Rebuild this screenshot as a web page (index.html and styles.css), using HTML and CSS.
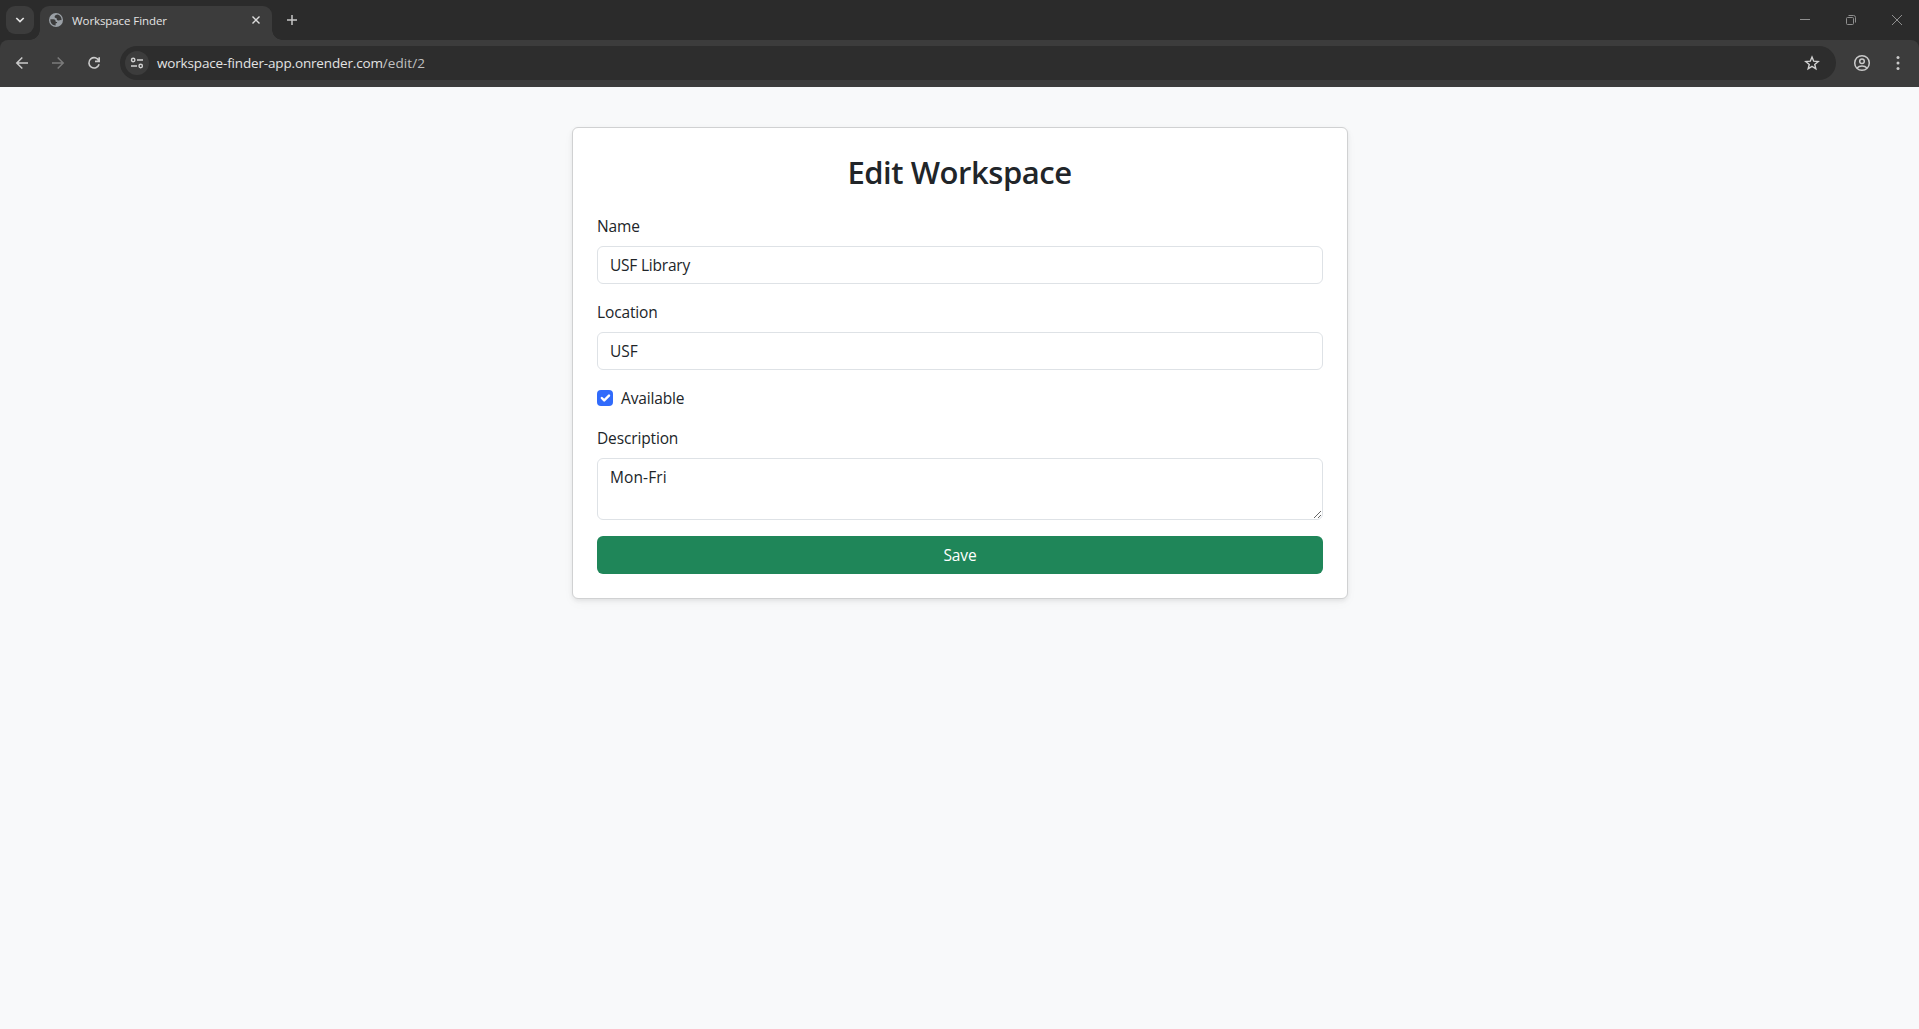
FILE: index.html
```html
<!DOCTYPE html>
<html lang="en">
<head>
<meta charset="utf-8">
<title>Workspace Finder</title>
<link rel="stylesheet" href="styles.css">
</head>
<body>
<header class="browser">
  <div class="tabstrip">
    <button class="tab-search" aria-label="Search tabs"><svg width="10" height="8" viewBox="0 0 10 8"><path d="M1.3 2l3.7 3.6L8.7 2" fill="none" stroke="#e3e3e3" stroke-width="1.7"/></svg></button>
    <div class="tab">
      <svg class="favicon" width="14" height="14" viewBox="0 0 14 14"><circle cx="7" cy="7" r="7" fill="#9aa0a6"/><path d="M1.400 6.300H4.500c1.500 0 2 .7 2 1.700 0 .8.600 1 1.500 1 .5 1-.4 1.400-1.400 1.500v2c-2.800.2-5.600-2.300-5.200-6.200zM8.800 1.600C7 1.700 5.500 2.800 5.600 3.900c.1.900.9 1 1.800 1 .3.900.4 2.300 1.700 2.500 1.300.2 2-.5 3.500-.2C12.700 4.300 11 2.200 8.800 1.600z" fill="#3c3c3c"/></svg>
      <span class="tab-title">Workspace Finder</span>
      <svg class="tab-close" width="10" height="10" viewBox="0 0 10 10"><path d="M1.500 1.500l7 7M8.500 1.500l-7 7" stroke="#dcdcdc" stroke-width="1.400"/></svg>
    </div>
    <svg class="new-tab" width="12" height="12" viewBox="0 0 12 12"><path d="M6 1v10M1 6h10" stroke="#c7c7c7" stroke-width="1.500"/></svg>
    <div class="window-controls">
      <svg width="12" height="12" viewBox="0 0 12 12"><path d="M1 5.500h10" stroke="#8f8f8f"/></svg>
      <svg width="12" height="12" viewBox="0 0 12 12" fill="none" stroke="#8f8f8f"><rect x="1.500" y="3.500" width="7" height="7" rx="1"/><path d="M3.500 1.500h5a2 2 0 0 1 2 2v5"/></svg>
      <svg width="12" height="12" viewBox="0 0 12 12"><path d="M1 1l10 10M11 1L1 11" stroke="#8f8f8f"/></svg>
    </div>
  </div>
  <div class="toolbar">
    <div class="nav">
      <svg width="16" height="16" viewBox="0 0 16 16" fill="none" stroke="#cacaca" stroke-width="1.500"><path d="M14 8H3M8.300 2.500L2.800 8l5.500 5.500"/></svg>
      <svg width="16" height="16" viewBox="0 0 16 16" fill="none" stroke="#7b7b7b" stroke-width="1.500"><path d="M2 8h11M7.700 2.500L13.200 8l-5.500 5.500"/></svg>
      <svg width="16" height="16" viewBox="0 0 16 16" fill="none" stroke="#cacaca" stroke-width="1.600"><path d="M12.900 5.800A5.200 5.200 0 1 0 13.100 9.300M13.200 2.200v4.200H9"/></svg>
    </div>
    <div class="omnibox">
      <span class="site-info"><svg width="14" height="14" viewBox="0 0 14 14" fill="none" stroke="#d2d2d2" stroke-width="1.400"><circle cx="3.200" cy="4" r="1.700"/><path d="M7 4h6M1 10h6"/><circle cx="10.700" cy="10" r="1.700"/></svg></span>
      <span class="url">workspace-finder-app.onrender.com<span class="path">/edit/2</span></span>
      <svg class="star" width="16" height="16" viewBox="0 0 16 16"><path d="M8 2l1.700 4.150 4.500.35-3.450 2.900 1.080 4.350L8 11.400l-3.830 2.350L5.250 9.400 1.800 6.500l4.500-.35z" fill="none" stroke="#d2d2d2" stroke-width="1.400"/></svg>
    </div>
    <svg class="profile" width="18" height="18" viewBox="0 0 18 18" fill="none" stroke="#cacaca" stroke-width="1.500"><circle cx="9" cy="9" r="7.300"/><circle cx="9" cy="7.300" r="2.300"/><path d="M4 14c2.500-2.600 7.500-2.600 10 0"/></svg>
    <svg class="menu" width="4" height="14" viewBox="0 0 4 14" fill="#cacaca"><circle cx="2" cy="1.600" r="1.500"/><circle cx="2" cy="7" r="1.500"/><circle cx="2" cy="12.400" r="1.500"/></svg>
  </div>
</header>
<main class="page">
  <form class="card">
    <h2 class="title">Edit Workspace</h2>
    <div class="field">
      <label class="label" for="name">Name</label>
      <input class="control library" id="name" value="USF Library">
    </div>
    <div class="field">
      <label class="label" for="location">Location</label>
      <input class="control" id="location" value="USF">
    </div>
    <div class="check">
      <span class="checkbox"><svg width="16" height="16" viewBox="0 0 20 20"><path fill="none" stroke="#fff" stroke-linecap="round" stroke-linejoin="round" stroke-width="3" d="M6 10l3 3 6-6"/></svg></span>
      <span class="check-label">Available</span>
    </div>
    <div class="field">
      <label class="label" for="description">Description</label>
      <textarea class="control area" id="description">Mon-Fri</textarea>
    </div>
    <button class="save" type="button">Save</button>
  </form>
</main>
</body>
</html>
```
FILE: styles.css
```css
* { box-sizing: border-box; }
body {
  margin: 0;
  height: 1029px;
  overflow: hidden;
  background: #f8f9fa;
  color: #212529;
  font-family: "Open Sans", "Noto Sans", sans-serif;
  font-size: 15.500px;
  line-height: 24px;
}
svg { display: block; flex: none; }
.browser { height: 87px; background: #2b2b2b; }
.tabstrip { display: flex; align-items: center; height: 40px; padding-left: 6px; }
.tab-search {
  display: flex; align-items: center; justify-content: center;
  width: 28px; height: 28px; padding: 0; border: 0; border-radius: 9px;
  background: #3c3c3c;
}
.tab {
  position: relative;
  display: flex; align-items: center;
  width: 232px; height: 34px; margin: 6px 0 0 6px; padding: 0 11px 6px 9px;
  border-radius: 9px 9px 0 0;
  background: #3c3c3c;
}
.tab::before, .tab::after {
  content: ""; position: absolute; bottom: 0; width: 10px; height: 10px;
}
.tab::before { left: -10px; background: radial-gradient(circle at 0 0, transparent 9.500px, #3c3c3c 10px); }
.tab::after { right: -10px; background: radial-gradient(circle at 100% 0, transparent 9.500px, #3c3c3c 10px); }
.tab-title { margin-left: 9px; padding-top: 1px; color: #e3e3e3; font-size: 11.500px; letter-spacing: -0.080px; white-space: nowrap; }
.tab-close { margin-left: auto; }
.new-tab { margin-left: 14px; }
.window-controls { display: flex; gap: 34px; margin-left: auto; padding-right: 16px; }
.toolbar {
  display: flex; align-items: center;
  height: 47px; padding: 0 19px 1px 14px;
  border-radius: 8px 8px 0 0;
  background: #3c3c3c;
}
.nav { display: flex; gap: 20px; }
.omnibox {
  display: flex; align-items: center; flex: 1;
  height: 34px; margin-left: 18px; padding: 0 16px 0 5px;
  border-radius: 17px;
  background: #2d2d2d;
}
.site-info {
  display: flex; align-items: center; justify-content: center;
  width: 24px; height: 24px; border-radius: 50%;
  background: #3c3c3c;
}
.url { margin-left: 8px; color: #e3e3e3; font-size: 13.500px; letter-spacing: -0.160px; white-space: nowrap; }
.path { color: #c0c0c0; letter-spacing: 0.100px; }
.star { margin-left: auto; }
.profile { margin-left: 17px; }
.menu { margin-left: 25px; }
.page { display: flex; justify-content: center; padding-top: 40px; }
.card {
  width: 776px; height: 472px; padding: 24px;
  border: 1px solid #d0d1d2; border-radius: 6px;
  background: #fff;
  box-shadow: 0 2px 4px rgba(0, 0, 0, 0.075), 0 4px 12px rgba(0, 0, 0, 0.030);
}
.title {
  height: 38.400px; margin: 0 0 24px; padding-top: 1px;
  font-size: 31px; font-weight: 600; line-height: 38.400px;
  text-align: center; letter-spacing: -0.450px;
}
.field { margin-bottom: 16px; }
.label { display: block; margin-bottom: 8px; padding-left: 0.500px; letter-spacing: -0.140px; }
.control {
  display: block; width: 100%; height: 38px; padding: 6px 12px 6px 12.500px;
  border: 1px solid #dee2e6; border-radius: 6px; outline: 0;
  background: #fff; color: #212529; font: inherit;
}
.library { letter-spacing: -0.220px; }
.area { height: 62px; resize: vertical; letter-spacing: 0.100px; }
.check { display: flex; align-items: center; height: 24px; margin-bottom: 16px; }
.checkbox { width: 16px; height: 16px; border-radius: 4px; background: #316bfb; }
.check-label { margin-left: 8.500px; letter-spacing: -0.150px; }
.save {
  display: block; width: 100%; height: 38px; padding: 0 0 0 1px;
  border: 0; border-radius: 6px;
  background: #1f8659; color: #fff; font: inherit; letter-spacing: -0.150px;
}
```
